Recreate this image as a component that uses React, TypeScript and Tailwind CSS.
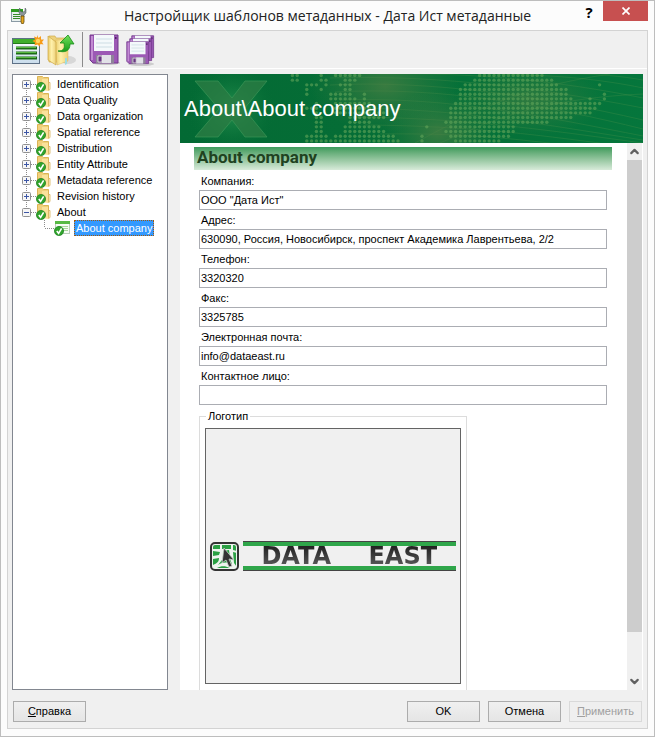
import { ChevronDown, ChevronUp } from "lucide-react";

const sections = [
  "Identification",
  "Data Quality",
  "Data organization",
  "Spatial reference",
  "Distribution",
  "Entity Attribute",
  "Metadata reference",
  "Revision history",
  "About",
];

const fields = [
  { id: "company", label: "Компания:", value: 'ООО "Дата Ист"' },
  { id: "address", label: "Адрес:", value: "630090, Россия, Новосибирск, проспект Академика Лаврентьева, 2/2" },
  { id: "phone", label: "Телефон:", value: "3320320" },
  { id: "fax", label: "Факс:", value: "3325785" },
  { id: "email", label: "Электронная почта:", value: "info@dataeast.ru" },
  { id: "contact", label: "Контактное лицо:", value: "" },
];

// Dotted world map: for each row, the [from, to] column runs that hold dots
const mapRows = [
  [[-32, -31], [-26, -26], [-23, -18], [7, 20]],
  [[-32, -31], [-26, -25], [-21, -19], [6, 22]],
  [[-29, -27], [-25, -25], [-22, -20], [4, 23], [32, 32]],
  [[-29, -29], [-26, -26], [-21, -20], [3, 25]],
  [[-29, -29], [-24, -20], [-17, -17], [3, 25], [33, 33]],
  [[-24, -19], [-17, -17], [3, 26], [30, 30], [33, 33]],
  [[-27, -27], [-23, -16], [2, 32]],
  [[-29, -27], [-23, -15], [1, 31]],
  [[-27, -27], [-23, -13], [1, 30]],
  [[-27, -26], [-20, -13], [1, 26]],
  [[-27, -26], [-20, -16], [0, 21]],
  [[-27, -26], [-21, -14], [-4, -4], [1, 14]],
  [[-27, -26], [-21, -13], [0, 14]],
  [[-29, -25], [-23, -11], [-5, -5], [1, 13]],
  [[-29, -10], [-5, -5], [2, 11]],
];

const mapDots = mapRows.flatMap((runs, row) =>
  runs.flatMap(([from, to]) =>
    Array.from({ length: to - from + 1 }, (_, i) => ({ x: 266 + (from + i) * 4.8, y: 1.5 + row * 4.67 }))
  )
);

function AppIcon() {
  return (
    <svg width="16" height="16" viewBox="0 0 16 16">
      <rect x="0.5" y="1.5" width="11" height="12" fill="#e9f0ee" stroke="#8a9aa5" />
      <rect x="0" y="1" width="12" height="3" fill="#2e9a20" />
      <path d="M2 6.5h7M2 8.5h7M2 10.5h7" stroke="#368a28" />
      <path d="M9 0v3l2 1h1l2-1V0l1 1v4l-2 2v2h-3V7L8 5V1z" fill="#8c9599" stroke="#4f585c" strokeWidth="0.5" />
      <path d="M10 8h3v6l-1 2h-1l-1-2z" fill="#e6a71c" stroke="#5d4712" strokeWidth="0.8" />
    </svg>
  );
}

function NewTemplateIcon() {
  return (
    <svg width="32" height="32" viewBox="0 0 32 32">
      <defs>
        <linearGradient id="sheet" x2="0" y2="1">
          <stop offset="0" stopColor="#fff" />
          <stop offset="1" stopColor="#c9dcec" />
        </linearGradient>
      </defs>
      <rect x="0.5" y="4.5" width="27" height="25" fill="url(#sheet)" stroke="#5e7187" />
      <rect x="1" y="5" width="26" height="5" fill="#3fae2b" />
      <path d="M1 9.5h26" stroke="#237c19" />
      <path d="M4 14h21M4 19h21M4 24h21" stroke="#1c6b17" strokeWidth="3" />
      <path d="M4 13.5h20M4 18.5h20M4 23.5h20" stroke="#59ba40" />
      <path d="M25 1l1.500 3 2.500-2v3.500l3 0-2 2.500 1.500 2.500-3-.5-1 2.500-2-2-3 1 .5-3-2.500-1.500 2.500-1.500-1-3 3 1z" fill="#f79b18" />
      <circle cx="26" cy="7" r="2.200" fill="#ffd560" />
    </svg>
  );
}

function OpenFolderIcon() {
  return (
    <svg width="32" height="32" viewBox="0 0 32 32">
      <defs>
        <linearGradient id="folder" x2="1" y2="0">
          <stop offset="0" stopColor="#e9ca68" />
          <stop offset="0.45" stopColor="#fff1ac" />
          <stop offset="1" stopColor="#ecd079" />
        </linearGradient>
        <linearGradient id="arrow" x2="0" y2="1">
          <stop offset="0" stopColor="#71e05b" />
          <stop offset="1" stopColor="#169d19" />
        </linearGradient>
      </defs>
      <ellipse cx="21" cy="26" rx="8" ry="4" fill="#bdbdbd" opacity="0.5" />
      <path d="M2 2h6l1 2h10v24H2z" fill="#edd27c" stroke="#d0ad4d" strokeWidth="0.7" />
      <path d="M8 6h13v21l-11 4z" fill="url(#folder)" stroke="#dcbb60" strokeWidth="0.5" />
      <path d="M1 2l8 6v23l-8-5z" fill="url(#folder)" stroke="#cda746" strokeWidth="0.7" />
      <path d="M18 24h2v6l-2 1z" fill="#9edce0" />
      <path d="M11 17c6 0 7-3 6-8h-4l8-8 6 9h-4c0 7-5 9-12 7z" fill="url(#arrow)" stroke="#168b17" strokeWidth="0.8" />
    </svg>
  );
}

function Floppy() {
  return (
    <g>
      <path d="M1 1h28v28H4l-3-3z" fill="#9c59b5" stroke="#70368a" />
      <path d="M2 2h2v24H2z" fill="#c18bd2" />
      <rect x="5" y="1" width="20" height="16" fill="#f4f9fb" />
      <path d="M7 5h16M7 9h16M7 13h16" stroke="#cddde4" />
      <path d="M7 21h18v8H7z" fill="#8d8498" />
      <path d="M13 21h9v8h-9z" fill="#e1e1e7" />
      <path d="M9 22h4v6H9z" fill="#693783" stroke="#eee" strokeWidth="0.8" />
      <path d="M26 3h1.500v2H26z" fill="#4d2162" />
    </g>
  );
}

function SaveIcon() {
  return (
    <svg width="32" height="32" viewBox="0 0 32 32">
      <ellipse cx="17" cy="29" rx="14" ry="2" fill="#c9c9c9" />
      <Floppy />
    </svg>
  );
}

function SaveAllIcon() {
  return (
    <svg width="32" height="32" viewBox="0 0 32 32">
      <ellipse cx="15" cy="30" rx="13" ry="2" fill="#cdcdcd" />
      <g transform="translate(5 1) scale(.78)"><Floppy /></g>
      <g transform="translate(3 4) scale(.78)"><Floppy /></g>
      <g transform="translate(0 7) scale(.78)"><Floppy /></g>
    </svg>
  );
}

function Expander({ first, open }: { first: boolean; open: boolean }) {
  return (
    <svg width="15" height="16" viewBox="0 0 15 16" className="shrink-0">
      <path d={`M5.500 ${first ? 8 : 0}V${open ? 8 : 16}M10 8.500H15`} stroke="#8c8c8c" strokeDasharray="1 1" fill="none" />
      <rect x="1.500" y="4.500" width="8" height="8" rx="1" fill="#f6f6f6" stroke="#919191" />
      <path d={open ? "M3 8.500h5" : "M3 8.500h5M5.500 6v5"} stroke="#3c56a5" />
    </svg>
  );
}

function CheckBadge() {
  return (
    <g>
      <circle cx="5" cy="11" r="4.600" fill="#30a32c" stroke="#197d1d" strokeWidth="0.7" />
      <path d="M2.800 11l1.800 2.300 3-5" stroke="#fff" strokeWidth="1.600" fill="none" />
    </g>
  );
}

function FolderIcon() {
  return (
    <svg width="16" height="16" viewBox="0 0 16 16" className="shrink-0">
      <path d="M1.500.5h5l1 1h5v12h-11z" fill="#f0d07c" stroke="#dcb454" />
      <path d="M6 3h6v12l-6-1z" fill="#fae19a" />
      <path d="M12.500 6.500h1.500v7l-1.500 1z" fill="#fff6d8" stroke="#d8b158" strokeWidth="0.8" />
      <CheckBadge />
    </svg>
  );
}

function PageIcon() {
  return (
    <svg width="17" height="16" viewBox="0 0 17 16" className="shrink-0">
      <rect x="1.500" y="1.500" width="14" height="12" fill="#f7fbf5" stroke="#b9cdb9" />
      <path d="M1 2.500h15" stroke="#58b944" strokeWidth="3" />
      <path d="M4 6.500h10M4 8.500h10M4 10.500h10" stroke="#a8d69b" />
      <CheckBadge />
    </svg>
  );
}

function BannerArt() {
  return (
    <svg viewBox="0 0 463 69" preserveAspectRatio="xMinYMid slice" className="absolute inset-0 h-full w-full" aria-hidden="true">
      <defs>
        <linearGradient id="green">
          <stop offset="0" stopColor="#036a34" />
          <stop offset="0.35" stopColor="#056d36" />
          <stop offset="1" stopColor="#05763c" />
        </linearGradient>
        <radialGradient id="xGlow">
          <stop offset="0" stopColor="#2f9a55" stopOpacity="0.85" />
          <stop offset="1" stopColor="#036a34" stopOpacity="0" />
        </radialGradient>
        <radialGradient id="gold">
          <stop offset="0" stopColor="#4f8044" stopOpacity="0.7" />
          <stop offset="1" stopColor="#3f8044" stopOpacity="0" />
        </radialGradient>
      </defs>
      <rect width="463" height="69" fill="url(#green)" />
      <ellipse cx="52" cy="35" rx="46" ry="46" fill="url(#xGlow)" />
      <path d="M15 7h23l14 17L65 7h22L64 35l23 28H65L52 46 38 63H15l24-28z" fill="#2b7c43" fillOpacity="0.8" stroke="#3b9657" strokeOpacity="0.7" />
      <g fill="none" stroke="#6f9e50" strokeOpacity="0.22">
        <path d="M150 4C240 1 340 10 463 34M150 11C250 6 360 22 463 46M155 18C260 12 370 32 463 55M160 26C270 22 370 44 463 62M165 34C280 34 370 52 463 66M175 43C290 44 380 58 463 69M185 51C300 52 370 63 420 69M200 60C290 59 330 65 370 69M200 0C290-2 380 7 463 24M300 0C370 0 420 5 463 14M390 0C420 0 440 2 463 6" />
        <path d="M260 69C300 52 350 25 463 20M235 69C290 40 330 15 430 0" />
      </g>
      <ellipse cx="205" cy="12" rx="75" ry="46" fill="url(#gold)" />
      <ellipse cx="258" cy="58" rx="56" ry="42" fill="url(#gold)" />
      <ellipse cx="350" cy="26" rx="75" ry="36" fill="url(#gold)" opacity="0.8" />
      {mapDots.map((dot) => (
        <circle key={`${dot.x}-${dot.y}`} cx={dot.x} cy={dot.y} r="1.700" fill="#62a55a" opacity="0.6" />
      ))}
    </svg>
  );
}

function LogoMark() {
  return (
    <svg width="29" height="29" viewBox="0 0 29 29" className="shrink-0">
      <defs>
        <clipPath id="markClip"><rect x="3" y="3" width="23" height="23" rx="2" /></clipPath>
      </defs>
      <rect x="1" y="1" width="27" height="27" rx="4" fill="#eef3ee" stroke="#333" strokeWidth="2" />
      <g clipPath="url(#markClip)">
        <path d="M3 3h7v4H3zM12 3h9v4h-9zM23 3h4v6l-4-1zM3 9l7 1-1 3-6 1zM13 9l6-1 1 8-7 1zM3 17l6-1c0 4-2 5-6 7zM12 18l8-1 2 5c-5-2-9-2-14 1zM7 26c5-3 10-2 14 1zM23 10l4 1v14l-3-4z" fill="#2aa043" />
      </g>
      <path d="M14 6l10 12-5-1 3 7-3 1-3-7-4 3z" fill="#343434" stroke="#ccd0cc" strokeWidth="0.8" />
    </svg>
  );
}

function DataEastLogo() {
  return (
    <div className="flex w-full items-center gap-1">
      <LogoMark />
      <div className="flex h-[30px] flex-1 flex-col justify-between">
        <div className="h-[5px] border-t border-[#444] bg-[#2fa64a]" />
        <div className="grid grid-cols-2 bg-linear-to-b from-[#222] to-[#5a5a5a] bg-clip-text text-center font-['DejaVu_Sans',sans-serif] text-[24px] leading-[20px] font-bold text-transparent">
          <span>DATA</span>
          <span>EAST</span>
        </div>
        <div className="h-[5px] border-b border-[#444] bg-[#2fa64a]" />
      </div>
    </div>
  );
}

const buttonClass =
  "h-[21px] border border-[#acacac] bg-linear-to-b from-[#f0f0f0] to-[#e5e5e5] text-center leading-[19px]";

export default function App() {
  return (
    <div className="flex h-screen flex-col border border-[#bdbdbd] bg-[#fcfcfc] px-[6px] pb-[7px] font-['Liberation_Sans',Arial,sans-serif] text-[11px] text-black">
      {/* Title bar */}
      <header className="relative flex h-[29px] shrink-0 items-center">
        <div className="pl-1">
          <AppIcon />
        </div>
        <h1 className="flex-1 pr-5 text-center font-['Open_Sans',sans-serif] text-[14px] text-[#222]">
          Настройщик шаблонов метаданных - Дата Ист метаданные
        </h1>
        <div className="absolute top-0 right-0 flex items-start">
          <button type="button" aria-label="Help" className="h-[21px] w-7 font-['Open_Sans',sans-serif] text-[15px] font-bold">
            ?
          </button>
          <button type="button" aria-label="Close" className="flex h-5 w-[45px] items-center justify-center bg-[#c75050]">
            <svg width="8" height="8" viewBox="0 0 8 8">
              <path d="M.5.5l7 7M7.500.5l-7 7" stroke="#fff" strokeWidth="1.700" />
            </svg>
          </button>
        </div>
      </header>

      <main className="flex min-h-0 flex-1 flex-col border border-[#d3d3d3] bg-[#f0f0f0]">
        {/* Toolbar */}
        <div role="toolbar" className="flex h-[38px] shrink-0 items-center border-b border-white pl-1">
          <button type="button" aria-label="New template"><NewTemplateIcon /></button>
          <button type="button" aria-label="Open template" className="ml-[3px]"><OpenFolderIcon /></button>
          <span className="mr-[6px] ml-[3px] h-[35px] w-px bg-[#8b8b8b]" />
          <button type="button" aria-label="Save"><SaveIcon /></button>
          <button type="button" aria-label="Save all" className="ml-[5px]"><SaveAllIcon /></button>
        </div>

        <div className="flex min-h-0 flex-1 gap-3 pt-[5px] pr-1 pl-1">
          {/* Section tree */}
          <nav className="w-[156px] shrink-0 border border-[#828790] bg-white pt-px pl-2">
            <ul>
              {sections.map((name, index) => (
                <li key={name} className="flex h-4 items-center">
                  <Expander first={index === 0} open={name === "About"} />
                  <FolderIcon />
                  <a href="#" className="ml-[5px] leading-4 whitespace-nowrap">{name}</a>
                </li>
              ))}
              <li className="flex h-4 items-center pl-[21px]">
                <svg width="12" height="16" viewBox="0 0 12 16" className="shrink-0">
                  <path d="M2.500 0V8M3 8.500h9" fill="none" stroke="#8c8c8c" strokeDasharray="1 1" />
                </svg>
                <PageIcon />
                <a
                  href="#"
                  aria-current="page"
                  className="ml-[3px] bg-[#3399ff] px-[2px] leading-4 whitespace-nowrap text-white outline-1 -outline-offset-1 outline-[#a3590a] outline-dotted"
                >
                  About company
                </a>
              </li>
            </ul>
          </nav>

          <section className="flex min-w-0 flex-1 flex-col bg-white">
            <div className="relative flex h-[69px] shrink-0 items-center overflow-hidden bg-[#056d36] pl-1">
              <BannerArt />
              <h2 className="relative text-[22px] text-white">About\About company</h2>
            </div>

            <div className="flex min-h-0 flex-1">
              <form className="min-w-0 flex-1 overflow-hidden pt-1 pr-[15px] pl-[14px]">
                <h3 className="h-[23px] bg-linear-to-b from-[#3c9a5c] to-[#d8ebda] pl-[3px] font-[Roboto,sans-serif] text-[17px] leading-[21px] font-bold text-[#20421f]">
                  About company
                </h3>
                <div className="pt-[3px] pr-[5px] pl-[5px]">
                  {fields.map((field) => (
                    <div key={field.id} className="flex h-[39px] flex-col">
                      <label htmlFor={field.id} className="h-[17px] pl-[2px] leading-[17px]">{field.label}</label>
                      <input
                        id={field.id}
                        type="text"
                        defaultValue={field.value}
                        className="h-5 w-full border border-[#abadb3] bg-white px-px outline-none"
                      />
                    </div>
                  ))}
                  <fieldset className="mt-[2px] w-[268px] border border-[#dcdcdc] px-[5px] pb-3">
                    <legend className="ml-px px-[2px] leading-[14px]">Логотип</legend>
                    <div className="mt-[5px] flex h-64 items-center border border-[#646464] bg-[#f0f0f0] px-1">
                      <DataEastLogo />
                    </div>
                  </fieldset>
                </div>
              </form>

              {/* Scrollbar */}
              <div className="mr-px flex w-[15px] shrink-0 flex-col bg-[#f0f0f0]">
                <button type="button" aria-label="Scroll up" className="flex h-[17px] items-center justify-center text-[#606060]">
                  <ChevronUp size={13} strokeWidth={4} />
                </button>
                <div className="flex-1">
                  <div className="h-[92%] bg-[#cdcdcd]" />
                </div>
                <button type="button" aria-label="Scroll down" className="flex h-[17px] items-center justify-center text-[#606060]">
                  <ChevronDown size={13} strokeWidth={4} />
                </button>
              </div>
            </div>
          </section>
        </div>

        {/* Dialog buttons */}
        <footer className="flex h-[38px] shrink-0 items-start gap-2 px-[5px] pt-[11px]">
          <button type="button" className={`${buttonClass} mr-auto w-[73px]`}>
            <span className="underline">С</span>правка
          </button>
          <button type="submit" className={`${buttonClass} w-[73px]`}>OK</button>
          <button type="button" className={`${buttonClass} w-[73px]`}>Отмена</button>
          <button type="button" disabled className="h-[21px] w-[73px] border border-[#d9d9d9] bg-[#efefef] text-center leading-[19px] text-[#a0a0a0]">
            <span className="underline">П</span>рименить
          </button>
        </footer>
      </main>
    </div>
  );
}
